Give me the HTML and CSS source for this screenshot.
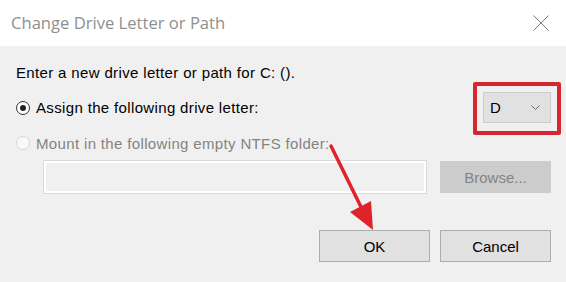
FILE: index.html
```html
<!DOCTYPE html>
<html>
<head>
<meta charset="utf-8">
<link rel="stylesheet" href="styles.css">
</head>
<body>
<div class="dialog">
  <div class="titlebar">
    <span class="title">Change Drive Letter or Path</span>
    <svg class="close" width="16" height="16" viewBox="0 0 16 16"><path d="M0.5 0.5 L15.5 15.5 M15.5 0.5 L0.5 15.5" stroke="#7a7a7a" stroke-width="1" fill="none"/></svg>
  </div>
  <div class="content">
    <div class="prompt">Enter a new drive letter or path for C: ().</div>
    <div class="row assign">
      <span class="radio checked"></span>
      <span class="label">Assign the following drive letter:</span>
      <div class="select-wrap">
        <div class="select"><span>D</span>
          <svg class="chev" width="9" height="5" viewBox="0 0 9 5"><path d="M0.5 0.5 L4.5 4.5 L8.5 0.5" stroke="#6b6b6b" stroke-width="1" fill="none"/></svg>
        </div>
        <div class="highlight"></div>
      </div>
    </div>
    <div class="row mount">
      <span class="radio disabled"></span>
      <span class="label dim">Mount in the following empty NTFS folder:</span>
    </div>
    <div class="row pathrow">
      <div class="textbox"></div>
      <div class="btn disabled-btn">Browse...</div>
    </div>
    <div class="row actions">
      <div class="btn">OK</div>
      <div class="btn">Cancel</div>
    </div>
  </div>
  <svg class="arrow" width="566" height="282" viewBox="0 0 566 282">
    <line x1="331" y1="146" x2="362" y2="209" stroke="#e0232b" stroke-width="3.5" stroke-linecap="round"/>
    <polygon points="373,230 350,212 371,201" fill="#e0232b"/>
  </svg>
</div>
</body>
</html>
```
FILE: styles.css
```css
html, body {
  margin: 0;
  padding: 0;
}
body {
  width: 566px;
  height: 282px;
  overflow: hidden;
  background: #f0f0f0;
  font-family: "Liberation Sans", Arial, sans-serif;
}
.dialog {
  position: relative;
  width: 566px;
  height: 282px;
  background: #f0f0f0;
}
.titlebar {
  height: 46px;
  background: #ffffff;
  display: flex;
  align-items: center;
  padding-left: 11px;
  box-sizing: border-box;
}
.title {
  font-family: "Open Sans", "Noto Sans", sans-serif;
  font-size: 16.6px;
  color: #8f8f8f;
  margin-top: -1px;
}
.close {
  margin-left: auto;
  margin-right: 17px;
  margin-top: -1px;
}
.content {
  padding: 0 15px 0 16px;
}
.prompt {
  margin-top: 18px;
  font-size: 15px;
  letter-spacing: 0.35px;
  line-height: 18px;
  color: #000;
}
.row {
  display: flex;
  align-items: center;
}
.assign {
  margin-top: 10px;
  height: 31px;
}
.radio {
  width: 14px;
  height: 14px;
  border-radius: 50%;
  box-sizing: border-box;
  flex: none;
  position: relative;
}
.radio.checked {
  border: 1px solid #333;
  background: #fff;
}
.radio.checked::after {
  content: "";
  position: absolute;
  left: 3px;
  top: 3px;
  width: 6px;
  height: 6px;
  border-radius: 50%;
  background: #222;
}
.radio.disabled {
  border: 1px solid #d6d6d6;
  background: #f9f9f9;
}
.label {
  margin-left: 6px;
  font-size: 15px;
  letter-spacing: 0.35px;
  color: #000;
}
.label.dim {
  color: #838383;
}
.select-wrap {
  margin-left: auto;
  position: relative;
}
.select {
  width: 68px;
  height: 31px;
  box-sizing: border-box;
  background: #e1e1e1;
  border: 1px solid #cccccc;
  display: flex;
  align-items: center;
  padding-left: 6px;
  font-size: 15px;
  color: #000;
}
.chev {
  margin-left: auto;
  margin-right: 10px;
}
.highlight {
  position: absolute;
  left: -10px;
  top: -10px;
  right: -10px;
  bottom: -12px;
  border: 4px solid #d4272f;
  border-radius: 2px;
}
.mount {
  margin-top: 10px;
  height: 20px;
}
.pathrow {
  margin-top: 7px;
  padding-left: 27px;
  justify-content: space-between;
}
.textbox {
  width: 384px;
  height: 34px;
  box-sizing: border-box;
  border: 1px solid #dadada;
  box-shadow: inset 0 0 0 2px #ffffff;
  background: #f0f0f0;
}
.btn {
  width: 111px;
  height: 32px;
  box-sizing: border-box;
  background: #e1e1e1;
  border: 1px solid #adadad;
  display: flex;
  align-items: center;
  justify-content: center;
  font-size: 15px;
  color: #000;
}
.disabled-btn {
  background: #cccccc;
  border-color: #cccccc;
  color: #848484;
}
.actions {
  margin-top: 36px;
  justify-content: flex-end;
  gap: 10px;
}
.arrow {
  position: absolute;
  left: 0;
  top: 0;
  pointer-events: none;
}
```
